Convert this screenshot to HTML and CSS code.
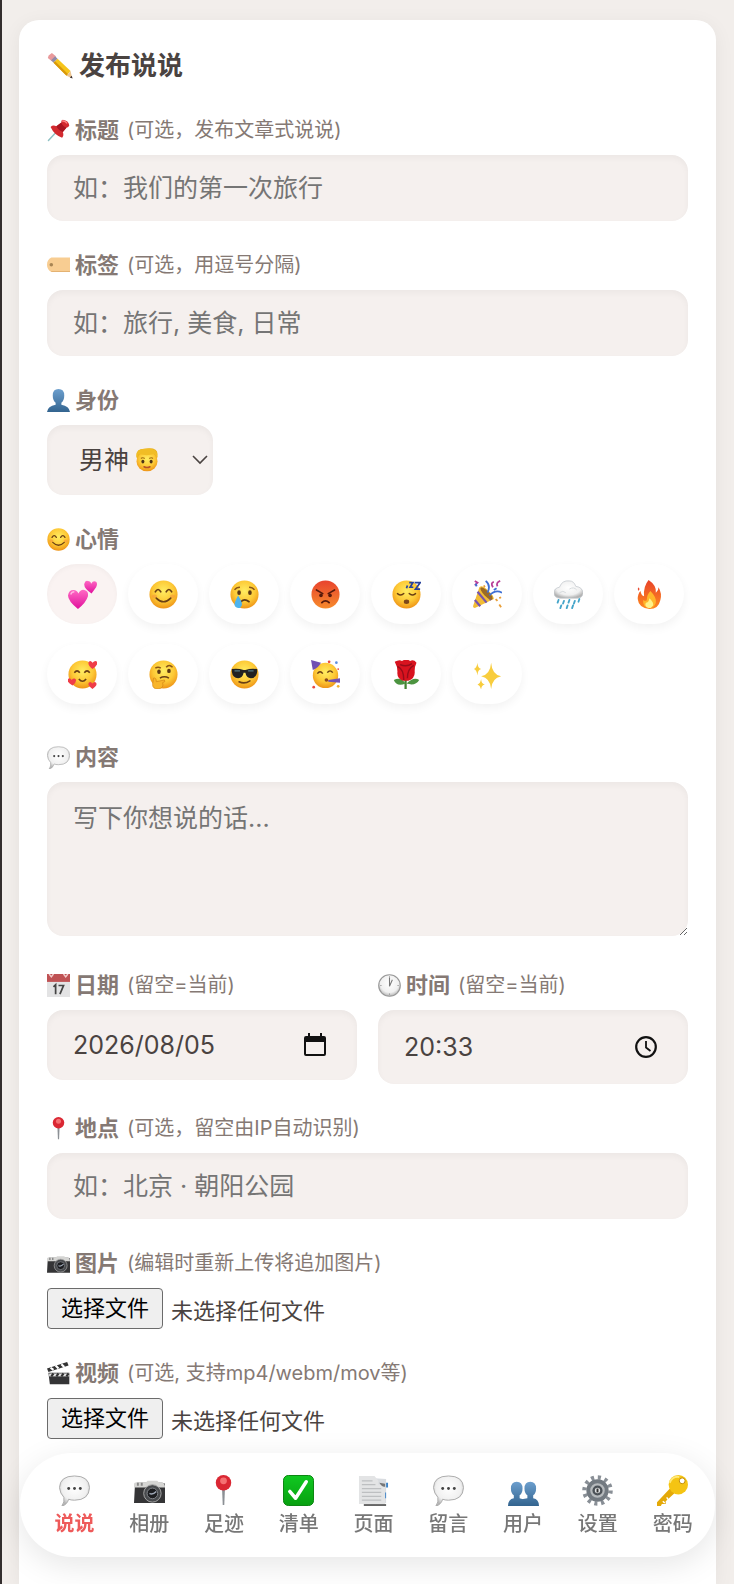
FILE: index.html
```html
<!DOCTYPE html>
<html lang="zh-CN">
<head>
    <meta charset="UTF-8">
    <meta name="viewport" content="width=device-width, initial-scale=1.0">
    <title>发布说说</title>
    <link rel="stylesheet" href="styles.css">
</head>
<body>

    <!-- Icon sprite -->
    <svg class="sprite" aria-hidden="true">
        <defs>
            <radialGradient id="g-face" cx="50%" cy="38%" r="62%">
                <stop offset="0" stop-color="#ffed62"/><stop offset=".6" stop-color="#fdc936"/><stop offset="1" stop-color="#ee9417"/>
            </radialGradient>
            <linearGradient id="g-angry" x1="0" y1="0" x2="0" y2="1">
                <stop offset="0" stop-color="#e8432e"/><stop offset="1" stop-color="#f78b2c"/>
            </linearGradient>
            <radialGradient id="g-grey" cx="50%" cy="40%" r="60%">
                <stop offset="0" stop-color="#fff"/><stop offset=".7" stop-color="#f0f0f0"/><stop offset="1" stop-color="#b4b4b4"/>
            </radialGradient>
            <linearGradient id="g-blue" x1="0" y1="0" x2="0" y2="1">
                <stop offset="0" stop-color="#6c9fce"/><stop offset="1" stop-color="#33648f"/>
            </linearGradient>
            <linearGradient id="g-pink" x1="0" y1="0" x2="0" y2="1">
                <stop offset="0" stop-color="#ff69c4"/><stop offset="1" stop-color="#e0109c"/>
            </linearGradient>
            <linearGradient id="g-fire" x1="0" y1="0" x2="0" y2="1">
                <stop offset="0" stop-color="#e8432a"/><stop offset="1" stop-color="#ff8a1e"/>
            </linearGradient>
            <linearGradient id="g-green" x1="0" y1="0" x2="0" y2="1">
                <stop offset="0" stop-color="#10c821"/><stop offset="1" stop-color="#08a010"/>
            </linearGradient>
        </defs>

        <symbol id="i-pencil" viewBox="0 0 32 32">
            <path d="M2 3 L6 0 L11 4 L6 10 L1 6 Z" fill="#e99a9c"/>
            <path d="M5 9 L10 4 L13 7 L8 12 Z" fill="#8f8ba8"/>
            <path d="M8 12 L13 7 L29 22 L24 28 Z" fill="#f6c51a"/>
            <path d="M8 12 L10 10 L26 26 L24 28 Z" fill="#d9980c"/>
            <path d="M29 22 L31 31 L24 28 Z" fill="#ecc48f"/>
            <path d="M30.500 28 L31.500 31.500 L28 30 Z" fill="#3a3030"/>
        </symbol>
        <symbol id="i-pushpin" viewBox="0 0 32 32">
            <path d="M12 19 L2 30" stroke="#8ec1c4" stroke-width="2" stroke-linecap="round"/>
            <path d="M5 11 Q8 8 13 10 L20 5 Q19 2 22 1 Q30 2 31 9 Q30 12 27 12 L22 18 Q24 23 21 26 Q10 22 5 11 Z" fill="#d32a2f"/>
            <path d="M13 10 L20 5 Q21 10 27 12 L22 18 Q16 16 13 10 Z" fill="#a91420"/>
            <path d="M21 3 Q25 2 28 6" stroke="#ff8585" stroke-width="2" fill="none"/>
        </symbol>
        <symbol id="i-tag" viewBox="0 0 32 32">
            <path d="M6 5 H32 V25 H6 Q0 22 0 15 Q0 8 6 5 Z" fill="#f8cd92"/>
            <path d="M6 24 H32 V25 H6 Z" fill="#dda766"/>
            <circle cx="6" cy="15" r="2.500" fill="#a88453"/>
        </symbol>
        <symbol id="i-user" viewBox="0 0 32 32">
            <path d="M16 0 Q24 0 24 9 Q24 16 20 19 V22 Q31 24 32 32 H0 Q1 24 12 22 V19 Q8 16 8 9 Q8 0 16 0 Z" fill="url(#g-blue)"/>
        </symbol>
        <symbol id="i-users" viewBox="0 0 32 32">
            <path d="M23 7 Q29 7 29 14 Q29 19 26 21 V24 Q32 25 32 32 H14 V25 L20 24 V21 Q17 19 17 14 Q17 7 23 7 Z" fill="url(#g-blue)"/>
            <path d="M9 7 Q15 7 15 14 Q15 19 12 21 V24 Q18 25 18 32 H0 Q0 25 6 24 V21 Q3 19 3 14 Q3 7 9 7 Z" fill="url(#g-blue)"/>
        </symbol>
        <symbol id="i-man" viewBox="0 0 32 32">
            <path d="M3 15 Q-1 1 12 1 Q30 -2 30 8 L29 15 Z" fill="#e8b01e"/>
            <ellipse cx="16" cy="18" rx="14" ry="13" fill="url(#g-face)"/>
            <path d="M2 13 Q0 1 14 1 Q31 -1 30 13 Q27 11 26 8 Q16 11 5 8 Q5 11 2 13 Z" fill="#f1bd25"/>
            <ellipse cx="10.500" cy="18" rx="2" ry="2.500" fill="#4f3317"/>
            <ellipse cx="21.500" cy="18" rx="2" ry="2.500" fill="#4f3317"/>
            <path d="M8 14 Q10 12 13 14 M19 14 Q22 12 24 14" stroke="#a16a10" stroke-width="1.500" fill="none"/>
            <path d="M12 25 Q16 27 20 25" stroke="#b5502a" stroke-width="2" fill="none" stroke-linecap="round"/>
        </symbol>
        <symbol id="i-smile" viewBox="0 0 32 32">
            <circle cx="16" cy="16" r="15.500" fill="url(#g-face)"/>
            <ellipse cx="6" cy="18" rx="3" ry="2" fill="#f79a3c" opacity=".6"/><ellipse cx="26" cy="18" rx="3" ry="2" fill="#f79a3c" opacity=".6"/>
            <path d="M7 13 Q10 8 13 13 M19 13 Q22 8 25 13" stroke="#6a3f14" stroke-width="1.800" fill="none" stroke-linecap="round"/>
            <path d="M8 20 Q16 28 24 20" stroke="#6a3f14" stroke-width="1.800" fill="none" stroke-linecap="round"/>
        </symbol>
        <symbol id="i-hearts" viewBox="0 0 32 32">
            <path d="M11 32 Q0 23 0 17 Q1 11 6 11 Q10 11 11.500 15 Q14 10 18 11 Q23 12 22 18 Q20 25 11 32 Z" fill="url(#g-pink)"/>
            <path d="M26 15 Q17 9 18 4 Q19 0 22 1 Q25 1 25.500 4 Q28 0 31 2 Q33 4 31 8 Z" fill="url(#g-pink)"/>
            <path d="M3 16 Q4 13 7 13" stroke="#ffb5e2" stroke-width="1.500" fill="none"/>
        </symbol>
        <symbol id="i-cry" viewBox="0 0 32 32">
            <circle cx="16" cy="16" r="15.500" fill="url(#g-face)"/>
            <path d="M5 11 Q7 8 11 8 M27 11 Q25 8 21 8" stroke="#8a5517" stroke-width="1.600" fill="none"/>
            <ellipse cx="10" cy="14" rx="2" ry="2.600" fill="#5c3813"/><ellipse cx="22" cy="14" rx="2" ry="2.600" fill="#5c3813"/>
            <path d="M12 24 Q16 20 21 24" stroke="#5c3813" stroke-width="1.800" fill="none" stroke-linecap="round"/>
            <path d="M9 17 Q14 25 13 28 Q12 31 9 31 Q5 30 5 27 Q5 24 9 17 Z" fill="#4db4ef"/>
        </symbol>
        <symbol id="i-angry" viewBox="0 0 32 32">
            <circle cx="16" cy="16" r="15.500" fill="url(#g-angry)"/>
            <path d="M6 11 L13 15 M26 11 L19 15" stroke="#571a0b" stroke-width="1.800" stroke-linecap="round"/>
            <circle cx="11" cy="17" r="2" fill="#571a0b"/><circle cx="21" cy="17" r="2" fill="#571a0b"/>
            <path d="M12 25 Q16 21 20 25" stroke="#571a0b" stroke-width="2" fill="none" stroke-linecap="round"/>
        </symbol>
        <symbol id="i-sleep" viewBox="0 0 32 32">
            <circle cx="16" cy="16" r="15.500" fill="url(#g-face)"/>
            <path d="M6 15 Q10 18 13 15 M19 15 Q22 18 26 15" stroke="#6a3f14" stroke-width="1.600" fill="none" stroke-linecap="round"/>
            <ellipse cx="16" cy="24" rx="3" ry="2.500" fill="#7d4719"/>
            <path d="M25 3 H31 L26 10 H31 M19 3 H23 L20 8 H23.500 M17 6 L16 9" stroke="#27419a" stroke-width="1.900" fill="none"/>
        </symbol>
        <symbol id="i-party" viewBox="0 0 32 32">
            <path d="M7 8 Q10 5 15 10 Q23 17 23 21 L2 31 Q0 31 0 29 Z" fill="#f2bd35"/>
            <path d="M5 13 L15 25 M2 22 L8 29 M9 9 L20 22" stroke="#7654ae" stroke-width="2.400"/>
            <ellipse cx="15" cy="15" rx="3" ry="9" transform="rotate(-45 15 15)" fill="#9a6a27"/>
            <path d="M16 14 Q20 6 14 1 M18 17 Q25 10 32 14" stroke="#3f70d5" stroke-width="2" fill="none"/>
            <path d="M2 1 L5 3 L2 6 M22 8 Q19 3 23 2 M27 7 Q25 3 30 1" stroke="#b93f98" stroke-width="2" fill="none"/>
            <path d="M25 21 L27 23 M29 27 L31 30 M12 6 L13 8 M29 20 L31 19" stroke="#e99f39" stroke-width="2"/>
            <path d="M23 11 L26 9 M3 4 L4 7" stroke="#3f70d5" stroke-width="2"/>
        </symbol>
        <symbol id="i-rain" viewBox="0 0 32 32">
            <path d="M7 20 Q0 20 0 14 Q0 9 6 8 Q9 0 17 1 Q22 1 24 7 Q32 8 32 15 Q31 20 26 20 Z" fill="url(#g-grey)" stroke="#bfc5cb" stroke-width=".8"/>
            <path d="M6 14 Q10 11 13 14 M17 10 Q22 7 25 11" stroke="#d3d7db" fill="none"/>
            <path d="M5 22 L4 25 M11 23 L10 26 M17 22 L16 25 M23 23 L22 26 M28 21 L27 24 M8 28 L7 31 M15 28 L14 31 M21 28 L20 31" stroke="#43a4c9" stroke-width="2" stroke-linecap="round"/>
        </symbol>
        <symbol id="i-fire" viewBox="0 0 32 32">
            <path d="M15 0 Q24 6 23 14 Q26 12 26 8 Q30 15 28 22 Q26 32 16 32 Q4 31 3 21 Q3 15 6 12 Q7 17 10 18 Q9 7 15 0 Z" fill="url(#g-fire)"/>
            <path d="M17 12 Q24 19 23 25 Q21 31 16 31 Q8 30 9 22 Q12 24 13 22 Q13 16 17 12 Z" fill="#ffb52a"/>
            <path d="M16 20 Q21 25 20 28 Q18 31 15 31 Q10 29 12 25 Q15 25 16 20 Z" fill="#fff28a"/>
            <path d="M4 8 Q6 10 4 12 Q2 10 4 8 Z" fill="#e8432a"/>
        </symbol>
        <symbol id="i-love" viewBox="0 0 32 32">
            <circle cx="16" cy="16" r="15.500" fill="url(#g-face)"/>
            <path d="M7 14 Q10 10 13 14 M18 14 Q21 10 24 14" stroke="#6a3f14" stroke-width="1.700" fill="none"/>
            <path d="M12 21 Q16 26 20 21" stroke="#6a3f14" stroke-width="1.800" fill="none"/>
            <path d="M27 10 Q21 5 23 2 Q25 0 27 3 Q30 0 32 2 Q34 5 27 10 Z M5 28 Q-2 24 0 21 Q2 19 4 22 Q7 19 9 22 Q9 25 5 28 Z M27 32 Q21 28 23 25 Q25 23 27 26 Q29 23 31 25 Q33 28 27 32 Z" fill="#ef3d48"/>
        </symbol>
        <symbol id="i-think" viewBox="0 0 32 32">
            <circle cx="16" cy="16" r="15.500" fill="url(#g-face)"/>
            <path d="M7 9 Q10 7 13 9 M19 8 Q22 4 26 8" stroke="#8a5517" stroke-width="1.700" fill="none"/>
            <ellipse cx="11" cy="13" rx="2" ry="2.400" fill="#5c3813"/><ellipse cx="22" cy="12" rx="2" ry="2.400" fill="#5c3813"/>
            <path d="M12 20 Q17 17 22 20" stroke="#6a3f14" stroke-width="1.700" fill="none"/>
            <path d="M5 20 Q8 19 8 24 L17 22 Q19 24 15 25 Q17 31 10 32 Q4 32 4 27 Z" fill="#f8b52b" stroke="#d58818" stroke-width=".8"/>
        </symbol>
        <symbol id="i-cool" viewBox="0 0 32 32">
            <circle cx="16" cy="16" r="15.500" fill="url(#g-face)"/>
            <path d="M2 10 Q9 9 15 11 H17 Q23 9 30 10 V13 Q29 20 23 20 Q18 20 17 14 H15 Q14 20 9 20 Q3 20 2 13 Z" fill="#222"/>
            <path d="M5 12 L11 12 M20 12 L26 12" stroke="#557b85" stroke-width="1.500"/>
            <path d="M10 24 Q16 27 22 23" stroke="#6a3f14" stroke-width="1.800" fill="none" stroke-linecap="round"/>
        </symbol>
        <symbol id="i-partyface" viewBox="0 0 32 32">
            <circle cx="16" cy="17" r="14" fill="url(#g-face)"/>
            <path d="M0 0 L11 3 Q8 9 2 11 Z" fill="#7150b3"/>
            <path d="M7 15 Q10 11 13 15 M18 14 Q21 10 24 14" stroke="#6a3f14" stroke-width="1.600" fill="none"/>
            <circle cx="17" cy="22" r="2" fill="#8a4a1c"/>
            <path d="M19 22 L32 20 V25 L19 24 Z" fill="#7352b5"/>
            <circle cx="20" cy="2" r="1.500" fill="#e84a3f"/><circle cx="28" cy="3" r="1.500" fill="#5d8fe0"/><circle cx="3" cy="30" r="1.500" fill="#e84a3f"/><circle cx="30" cy="29" r="1.500" fill="#f0b030"/><circle cx="30" cy="10" r="1" fill="#e84a3f"/>
        </symbol>
        <symbol id="i-rose" viewBox="0 0 32 32">
            <path d="M15 20 V32" stroke="#438432" stroke-width="2.500"/>
            <path d="M15 26 Q5 30 2 22 Q10 18 15 26 M16 26 Q24 18 30 22 Q26 29 16 26" fill="#4c9440"/>
            <path d="M3 2 Q8 -1 11 1 Q16 -2 20 1 Q24 -1 27 3 Q25 7 25 12 Q26 20 18 23 H12 Q5 20 6 13 Q6 7 3 2 Z" fill="#d8131f"/>
            <path d="M6 7 Q13 10 13 22 M24 6 Q17 10 17 20 M9 5 Q16 8 22 4" stroke="#960c19" stroke-width="1.500" fill="none"/>
        </symbol>
        <symbol id="i-sparkles" viewBox="0 0 32 32">
            <path d="M20 3 Q21 16 31 18 Q21 20 20 32 Q19 20 9 18 Q19 16 20 3 Z M5 3 Q5 9 9 10 Q5 11 5 17 Q4 11 1 10 Q4 9 5 3 Z M9 21 Q9 26 13 27 Q9 28 9 33 Q8 28 5 27 Q8 26 9 21 Z" fill="#f8cd3e"/>
        </symbol>
        <symbol id="i-bubble" viewBox="0 0 32 32">
            <path d="M16 1 Q31 1 31.500 13 Q31 26 16 26 Q12 26 10 25 Q8 31 3 32 Q6 28 5 23 Q1 19 .5 13 Q1 1 16 1 Z" fill="url(#g-grey)" stroke="#aaa" stroke-width="1"/>
            <circle cx="10" cy="14" r="1.500" fill="#444"/><circle cx="16" cy="14" r="1.500" fill="#444"/><circle cx="22" cy="14" r="1.500" fill="#444"/>
        </symbol>
        <symbol id="i-calendar" viewBox="0 0 32 32">
            <path d="M0 0 H32 V32 H0 Z" fill="#e3e3e4"/>
            <path d="M0 0 H32 V11 H0 Z" fill="#bf5254"/>
            <path d="M3 0 L6 4 L9 0 M23 0 L26 4 L29 0" stroke="#f3cccc" stroke-width="2" fill="none"/>
            <path d="M9 18 L12 15 V28 M16 16 H23 L18 28" stroke="#444" stroke-width="2.400" fill="none"/>
        </symbol>
        <symbol id="i-clock" viewBox="0 0 32 32">
            <circle cx="16" cy="16" r="15" fill="url(#g-grey)" stroke="#999" stroke-width="1.600"/>
            <path d="M16 5 V17 L20 8" stroke="#777" stroke-width="1.500" fill="none"/>
            <path d="M16 3 V5 M27 16 H29 M16 27 V29 M3 16 H5" stroke="#888"/>
        </symbol>
        <symbol id="i-pin" viewBox="0 0 32 32">
            <path d="M14.500 14 H17.500 L16.800 31 H15.200 Z" fill="#8c9095"/>
            <circle cx="16" cy="8" r="8" fill="#da2733"/>
            <circle cx="16" cy="6" r="3.500" fill="#f57072"/>
        </symbol>
        <symbol id="i-camera" viewBox="0 0 32 32">
            <path d="M1 10 Q1 8 3 8 H29 Q32 8 32 10 V29 H0 Z" fill="#343436"/>
            <path d="M0 9 Q1 7 3 8 H12 L14 6 H24 L26 8 H30 Q32 9 32 13 H0 Z" fill="#d5d5d3"/>
            <path d="M4 8 V11 M8 8 V11" stroke="#888" stroke-width="2"/>
            <circle cx="19" cy="19" r="9" fill="#484a4d" stroke="#a5a5a5" stroke-width="1"/>
            <circle cx="19" cy="19" r="5.500" fill="#1c1d20" stroke="#83868b" stroke-width="1"/>
            <path d="M16 19 Q19 21 23 17" stroke="#a0aab8" stroke-width="1.500" fill="none"/>
        </symbol>
        <symbol id="i-clapper" viewBox="0 0 32 32">
            <path d="M2 15 H31 V31 H4 Z" fill="#343436"/>
            <path d="M0 9 L28 0 L30 5 L2 14 Z" fill="#333"/>
            <path d="M5 8 L9 11 M12 5 L16 9 M20 3 L24 7" stroke="#fff" stroke-width="3"/>
            <path d="M3 16 H31 V20 H3 Z" fill="#e8e8e8"/>
            <path d="M6 20 L9 16 M13 20 L16 16 M20 20 L23 16 M27 20 L30 16" stroke="#333" stroke-width="3"/>
        </symbol>
        <symbol id="i-check" viewBox="0 0 32 32">
            <rect x=".5" y=".5" width="31" height="31" rx="5" fill="url(#g-green)" stroke="#08830e"/>
            <path d="M7 17 L13 24 L24 7" fill="none" stroke="#fff" stroke-width="3.600" stroke-linecap="round" stroke-linejoin="round"/>
        </symbol>
        <symbol id="i-pages" viewBox="0 0 32 32">
            <path d="M13 3 L29 4 V29 L13 31 Z" fill="#d9dce0"/>
            <path d="M29 8 H31 V13 H29 Z M26 18 H29 V24 H26 Z" fill="#3f84c7"/>
            <path d="M10 30 H29 V32 H6 V30 Z" fill="#666"/>
            <path d="M1 1 H17 L21 6 V10 H28 V30 H1 Z" fill="#e3e4e5"/>
            <path d="M17 1 L22 8 Q25 13 28 12 V9 L22 8 Z" fill="#777"/>
            <path d="M4 6 H15 M4 10 H18 M4 14 H24 M4 18 H24 M4 22 H24 M4 26 H24" stroke="#bdbfc1" stroke-width="1.200"/>
        </symbol>
        <symbol id="i-gear" viewBox="0 0 32 32">
            <circle cx="16" cy="16" r="13.500" fill="none" stroke="#898f96" stroke-width="4.500" stroke-dasharray="3.200 3.860"/>
            <circle cx="16" cy="16" r="9.500" fill="#b6babd" stroke="#737a81" stroke-width="4"/>
            <circle cx="16" cy="16" r="4" fill="#dfe1e3" stroke="#4c5258" stroke-width="2.500"/>
            <path d="M16 14 V18" stroke="#333" stroke-width="2"/>
        </symbol>
        <symbol id="i-key" viewBox="0 0 32 32">
            <path d="M15 12 L20 17 L9 27 V30 H5 L4 32 H0 V28 Z" fill="#e4a908"/>
            <path d="M10 23 L12 26 M6 27 L8 29" stroke="#fff" stroke-width="1.500"/>
            <circle cx="22" cy="10" r="10" fill="#f5c413"/>
            <path d="M13 8 Q16 1 23 2" stroke="#ffe978" stroke-width="2" fill="none"/>
            <circle cx="26" cy="6" r="3" fill="#fff" stroke="#c18c08" stroke-width="1"/>
        </symbol>
        <symbol id="i-chevron" viewBox="0 0 16 16">
            <path d="M1 4 L8 11 L15 4" fill="none" stroke="#4a4341" stroke-width="1.600"/>
        </symbol>
        <symbol id="i-date" viewBox="0 0 22 24">
            <path d="M4 0 H6 V3 H16 V0 H18 V3 H20 Q22 3 22 5 V21 Q22 23 20 23 H2 Q0 23 0 21 V5 Q0 3 2 3 H4 Z M2 9 V21 H20 V9 Z" fill="#111" fill-rule="evenodd"/>
        </symbol>
        <symbol id="i-time" viewBox="0 0 22 22">
            <circle cx="11" cy="11" r="9.800" fill="none" stroke="#111" stroke-width="2.200"/>
            <path d="M11 5 V11.500 L15.500 15" fill="none" stroke="#111" stroke-width="1.800"/>
        </symbol>
    </svg>

    <div class="container">
        <form class="card">
            <h2><svg><use href="#i-pencil"/></svg>发布说说</h2>

            <div class="form-group">
                <label for="title"><svg><use href="#i-pushpin"/></svg>标题 <small>(可选，发布文章式说说)</small></label>
                <input type="text" id="title" class="field" placeholder="如：我们的第一次旅行">
            </div>

            <div class="form-group">
                <label for="tags"><svg><use href="#i-tag"/></svg>标签 <small>(可选，用逗号分隔)</small></label>
                <input type="text" id="tags" class="field" placeholder="如：旅行, 美食, 日常">
            </div>

            <div class="form-group">
                <label for="role"><svg><use href="#i-user"/></svg>身份</label>
                <div class="select-wrap">
                    <select id="role" class="field">
                        <option>男神</option>
                        <option>女神</option>
                    </select>
                    <span class="select-icons"><svg class="man"><use href="#i-man"/></svg><svg class="chevron"><use href="#i-chevron"/></svg></span>
                </div>
            </div>

            <!-- Mood picker -->
            <div class="form-group">
                <div class="label" id="mood-label"><svg><use href="#i-smile"/></svg>心情</div>
                <div class="moods" role="group" aria-labelledby="mood-label">
                    <button type="button" class="mood active" aria-label="爱心"><svg><use href="#i-hearts"/></svg></button>
                    <button type="button" class="mood" aria-label="开心"><svg><use href="#i-smile"/></svg></button>
                    <button type="button" class="mood" aria-label="难过"><svg><use href="#i-cry"/></svg></button>
                    <button type="button" class="mood" aria-label="生气"><svg><use href="#i-angry"/></svg></button>
                    <button type="button" class="mood" aria-label="困"><svg><use href="#i-sleep"/></svg></button>
                    <button type="button" class="mood" aria-label="庆祝"><svg><use href="#i-party"/></svg></button>
                    <button type="button" class="mood" aria-label="下雨"><svg><use href="#i-rain"/></svg></button>
                    <button type="button" class="mood" aria-label="火"><svg><use href="#i-fire"/></svg></button>
                    <button type="button" class="mood" aria-label="喜爱"><svg><use href="#i-love"/></svg></button>
                    <button type="button" class="mood" aria-label="思考"><svg><use href="#i-think"/></svg></button>
                    <button type="button" class="mood" aria-label="酷"><svg><use href="#i-cool"/></svg></button>
                    <button type="button" class="mood" aria-label="派对"><svg><use href="#i-partyface"/></svg></button>
                    <button type="button" class="mood" aria-label="玫瑰"><svg><use href="#i-rose"/></svg></button>
                    <button type="button" class="mood" aria-label="闪耀"><svg><use href="#i-sparkles"/></svg></button>
                </div>
            </div>

            <div class="form-group">
                <label for="content"><svg><use href="#i-bubble"/></svg>内容</label>
                <textarea id="content" class="field" placeholder="写下你想说的话..."></textarea>
            </div>

            <div class="form-row">
                <div class="form-group">
                    <label for="date"><svg><use href="#i-calendar"/></svg>日期 <small>(留空=当前)</small></label>
                    <div class="picker">
                        <input type="text" id="date" class="field date" value="2026/08/05">
                        <svg><use href="#i-date"/></svg>
                    </div>
                </div>
                <div class="form-group">
                    <label for="time"><svg><use href="#i-clock"/></svg>时间 <small>(留空=当前)</small></label>
                    <div class="picker">
                        <input type="text" id="time" class="field time" value="20:33">
                        <svg><use href="#i-time"/></svg>
                    </div>
                </div>
            </div>

            <div class="form-group">
                <label for="place"><svg><use href="#i-pin"/></svg>地点 <small>(可选，留空由IP自动识别)</small></label>
                <input type="text" id="place" class="field" placeholder="如：北京 · 朝阳公园">
            </div>

            <!-- Uploads -->
            <div class="form-group">
                <div class="label"><svg><use href="#i-camera"/></svg>图片 <small>(编辑时重新上传将追加图片)</small></div>
                <div class="file">
                    <input type="file" id="images" accept="image/*" multiple>
                    <label class="file-btn" for="images">选择文件</label>
                    <span>未选择任何文件</span>
                </div>
            </div>

            <div class="form-group">
                <div class="label"><svg><use href="#i-clapper"/></svg>视频 <small>(可选, 支持mp4/webm/mov等)</small></div>
                <div class="file">
                    <input type="file" id="video" accept="video/*">
                    <label class="file-btn" for="video">选择文件</label>
                    <span>未选择任何文件</span>
                </div>
            </div>
        </form>
    </div>

    <!-- Bottom navigation -->
    <nav class="tabbar">
        <a href="#" class="active"><svg><use href="#i-bubble"/></svg>说说</a>
        <a href="#"><svg><use href="#i-camera"/></svg>相册</a>
        <a href="#"><svg><use href="#i-pin"/></svg>足迹</a>
        <a href="#"><svg><use href="#i-check"/></svg>清单</a>
        <a href="#"><svg><use href="#i-pages"/></svg>页面</a>
        <a href="#"><svg><use href="#i-bubble"/></svg>留言</a>
        <a href="#"><svg><use href="#i-users"/></svg>用户</a>
        <a href="#"><svg><use href="#i-gear"/></svg>设置</a>
        <a href="#"><svg><use href="#i-key"/></svg>密码</a>
    </nav>
</body>
</html>
```
FILE: styles.css
```css
* {
    box-sizing: border-box;
}

body {
    margin: 0;
    font-family: Inter, "Noto Sans CJK SC", sans-serif;
    color: #4a4341;
    background: #f2eeeb;
    border-left: 2px solid #332e2e;
}

.sprite {
    position: absolute;
    width: 0;
    height: 0;
}

.container {
    display: flex;
    min-height: 100vh;
    padding: 20px 18px 0 17px;
}

.card {
    flex: 1;
    min-width: 0;
    padding: 28px 28px 0;
    background: #fff;
    border-radius: 20px 20px 0 0;
    box-shadow: 0 4px 20px rgba(0, 0, 0, 0.06);
}

h2 {
    display: flex;
    align-items: center;
    gap: 6px;
    margin: 0 0 29px;
    font-size: 26px;
    line-height: 36px;
    font-weight: 700;
}

h2 svg {
    width: 26px;
    height: 26px;
}

.form-group {
    margin-bottom: 27px;
}

.form-group > label,
.label {
    display: flex;
    align-items: center;
    gap: 5px;
    margin-bottom: 8px;
    color: #857974;
    font-size: 22px;
    line-height: 34px;
    font-weight: 700;
}

.form-group > label svg,
.label svg {
    width: 23px;
    height: 23px;
}

small {
    margin-left: 3px;
    font-size: 20px;
    font-weight: 400;
}

/* Fields */
.field {
    display: block;
    width: 100%;
    height: 66px;
    padding: 0 26px;
    border: none;
    border-radius: 16px;
    outline: none;
    background: #f5f0ee;
    box-shadow: inset 0 3px 6px rgba(0, 0, 0, 0.04);
    color: #4a4341;
    font-family: inherit;
    font-size: 25px;
}

.field::placeholder {
    color: #757575;
}

textarea.field {
    height: 154px;
    margin-bottom: 32px;
    padding-top: 18px;
    line-height: 36px;
}

.select-wrap,
.picker {
    display: grid;
    align-items: center;
}

.select-wrap > *,
.picker > * {
    grid-area: 1 / 1;
}

.select-wrap {
    width: 166px;
}

select.field {
    height: 70px;
    padding: 0 32px;
    appearance: none;
}

.select-icons {
    display: flex;
    align-items: center;
    justify-content: flex-end;
    gap: 33px;
    padding-right: 5px;
    pointer-events: none;
}

.man {
    width: 24px;
    height: 24px;
}

.chevron {
    width: 16px;
    height: 16px;
}

.form-row {
    display: grid;
    grid-template-columns: 1fr 1fr;
    gap: 21px;
}

.picker svg {
    justify-self: end;
    width: 22px;
    height: 24px;
    margin-right: 31px;
}

.date {
    height: 70px;
}

.time {
    height: 74px;
}

/* Moods */
.moods {
    display: flex;
    flex-wrap: wrap;
    gap: 20px 11px;
    margin-bottom: 36px;
}

.mood {
    display: flex;
    align-items: center;
    justify-content: center;
    width: 70px;
    height: 60px;
    padding: 0;
    border: none;
    border-radius: 30px;
    background: #fff;
    box-shadow: 0 4px 10px rgba(0, 0, 0, 0.05);
    cursor: pointer;
}

.mood.active {
    background: #faf3f2;
    box-shadow: inset 0 2px 5px rgba(0, 0, 0, 0.03);
}

.mood svg {
    width: 29px;
    height: 29px;
}

/* File inputs */
.file {
    display: flex;
    align-items: center;
    gap: 8px;
    font-size: 22px;
}

.file input {
    position: absolute;
    width: 1px;
    height: 1px;
    opacity: 0;
}

.file-btn {
    padding: 0 13px;
    border: 1px solid #6b6b6b;
    border-radius: 4px;
    background: #efefef;
    color: #000;
    line-height: 39px;
    cursor: pointer;
}

/* Bottom navigation */
.tabbar {
    position: fixed;
    left: 20px;
    right: 19px;
    bottom: 27px;
    display: flex;
    padding: 22px 5px 18px 17px;
    border-radius: 52px;
    background: #fff;
    box-shadow: 0 8px 32px rgba(0, 0, 0, 0.1);
}

.tabbar a {
    flex: 1;
    display: flex;
    flex-direction: column;
    align-items: center;
    gap: 3px;
    color: #777;
    font-size: 20px;
    line-height: 30px;
    font-weight: 500;
    text-decoration: none;
}

.tabbar svg {
    width: 31px;
    height: 31px;
}

.tabbar .active {
    color: #ee5a5a;
    font-weight: 700;
}
```
